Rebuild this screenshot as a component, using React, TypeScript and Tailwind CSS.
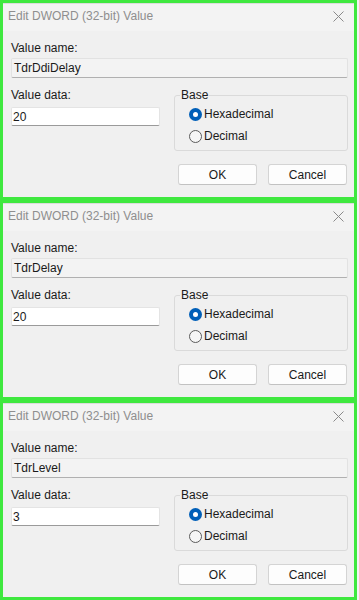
import type { ReactNode } from 'react'

const font = { fontFamily: '"Liberation Sans", Arial, sans-serif' }

function Radio({ checked, children }: { checked?: boolean; children: ReactNode }) {
  return (
    <div className="flex items-center h-[22px] gap-[2px]">
      {checked ? (
        <span className="w-[13px] h-[13px] rounded-full bg-[#005fb8] flex items-center justify-center">
          <span className="w-[5px] h-[5px] rounded-full bg-white" />
        </span>
      ) : (
        <span className="w-[13px] h-[13px] rounded-full border border-[#5c5c5c] bg-[#f6f6f6]" />
      )}
      <span className="text-[12px] leading-[16px] text-[#1a1a1a]">{children}</span>
    </div>
  )
}

function Button({ children }: { children: ReactNode }) {
  return (
    <button className="w-[79px] h-[21px] rounded-[3px] bg-[#fdfdfd] border border-[#d4d4d4] border-b-[#c2c2c2] text-[12px] leading-[16px] text-[#1a1a1a]">
      {children}
    </button>
  )
}

function DwordDialog({ name, data }: { name: string; data: string }) {
  return (
    <div className="w-[357px] h-[200px] border-[3px] border-[#3fe83f] bg-[#f0f0f0] flex flex-col">
      <div className="h-[28px] bg-[#f3f3f3] border-t border-[#dcdcdc] flex items-start justify-between pl-[5px] pr-[8px] pt-[4px]">
        <span className="text-[12px] leading-[16px] text-[#8e8e8e]">Edit DWORD (32-bit) Value</span>
        <svg width="11" height="11" viewBox="0 0 11 11" className="mt-[3px] mr-[2px]">
          <path d="M0.5 0.5 L10.5 10.5 M10.5 0.5 L0.5 10.5" stroke="#8a8a8a" strokeWidth="1" />
        </svg>
      </div>
      <div className="flex flex-col pl-[8px] pr-[6px]">
        <div className="mt-[9px] text-[12px] leading-[16px] text-[#1a1a1a]">Value name:</div>
        <div className="mt-[2px] h-[20px] bg-[#f3f3f3] border border-[#e2e2e2] border-b-[#b0b0b0] rounded-[2px] px-[2px] flex items-center text-[12px] leading-[16px] text-[#1a1a1a]">
          {name}
        </div>
        <div className="mt-[9px] flex gap-[14px]">
          <div className="w-[149px] flex flex-col">
            <div className="text-[12px] leading-[16px] text-[#1a1a1a]">Value data:</div>
            <div className="mt-[4px] h-[19px] bg-white border border-[#e4e4e4] border-b-[#9a9a9a] rounded-[2px] px-[1px] flex items-center text-[12px] leading-[16px] text-[#1a1a1a]">
              {data}
            </div>
          </div>
          <fieldset className="flex-1 border border-[#dadada] rounded-[3px] pl-[5px] pb-[3px]">
            <legend className="px-[1px] text-[12px] leading-[16px] text-[#1a1a1a]">Base</legend>
            <div className="ml-[9px] flex flex-col">
              <Radio checked>Hexadecimal</Radio>
              <Radio>Decimal</Radio>
            </div>
          </fieldset>
        </div>
        <div className="mt-[13px] flex justify-end gap-[11px] pr-[1px]">
          <Button>OK</Button>
          <Button>Cancel</Button>
        </div>
      </div>
    </div>
  )
}

export default function App() {
  return (
    <div className="w-[359px] h-[600px] bg-[#f4f4f4] flex flex-col" style={font}>
      <DwordDialog name="TdrDdiDelay" data="20" />
      <DwordDialog name="TdrDelay" data="20" />
      <DwordDialog name="TdrLevel" data="3" />
    </div>
  )
}
